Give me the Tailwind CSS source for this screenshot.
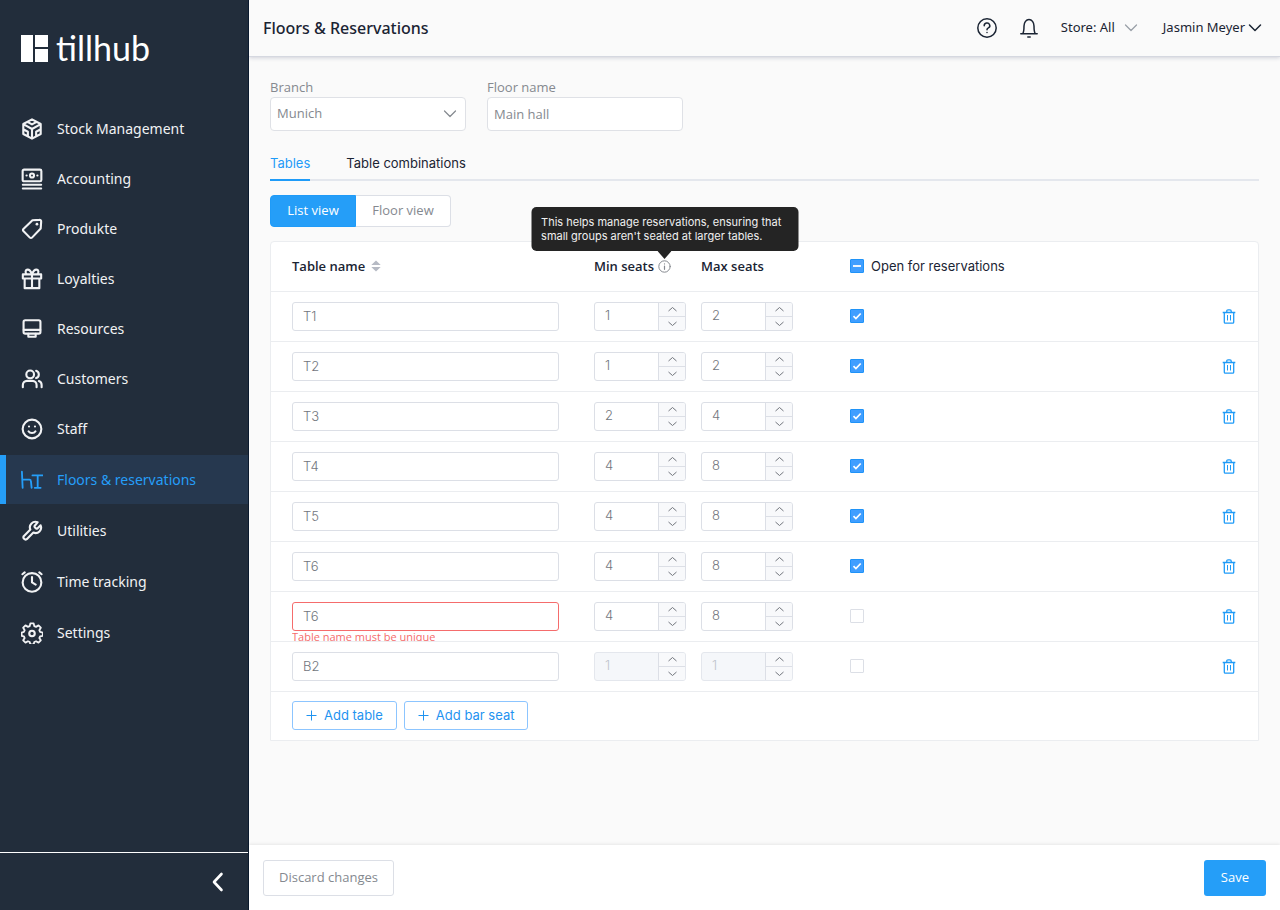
<!DOCTYPE html>
<html lang="en">
<head>
  <meta charset="UTF-8" />
  <title>Floors & Reservations</title>
  <meta name="viewport" content="width=device-width, initial-scale=1.0" />
  <script src="https://cdn.jsdelivr.net/npm/@tailwindcss/browser@4"></script>
</head>
<body class="flex min-h-screen bg-[#fafafa] font-['Open_Sans','Noto_Sans',sans-serif] text-[13px] text-[#1a2433]">

  <!-- Sidebar -->
  <aside class="flex w-[249px] shrink-0 flex-col border-r border-[#0b1a2e] bg-[#222d3b] text-white">
    <a href="#" class="flex h-[104px] items-center gap-2 px-5 pb-2">
      <svg class="h-7 w-7" viewBox="0 0 28 28" fill="currentColor" aria-hidden="true">
        <path d="M1 1h12v27H1zM15 1h13v12H15zM15 15h13v13H15z" />
      </svg>
      <span class="font-[Lato,sans-serif] text-[34px] leading-8">tillhub</span>
    </a>

    <nav class="flex grow flex-col gap-[2px] font-['Noto_Sans',sans-serif] text-sm">
      <ul class="flex flex-col gap-px" id="mainNav"></ul>
      <ul class="flex flex-col gap-[2px]" id="toolNav"></ul>
    </nav>

    <div class="flex h-[58px] items-center justify-end border-t border-white pr-5">
      <button type="button" aria-label="Collapse menu">
        <svg class="h-5 w-5" viewBox="0 0 20 20" fill="none" stroke="currentColor" stroke-width="2.6" stroke-linecap="round" stroke-linejoin="round"><path d="M13.500 2 6 10l7.500 8" /></svg>
      </button>
    </div>
  </aside>

  <div class="flex min-w-0 grow flex-col">
    <!-- Top bar -->
    <header class="flex h-[57px] shrink-0 items-center border-b border-[#d5d8e0] pr-[17px] pl-[14px] font-['Noto_Sans',sans-serif] shadow-[0_1px_4px_rgba(20,30,70,0.18)]">
      <h1 class="grow text-base font-medium">Floors &amp; Reservations</h1>
      <button type="button" aria-label="Help" class="mr-[22px]">
        <svg class="h-5 w-5" viewBox="0 0 20 20" fill="none" stroke="currentColor" stroke-width="1.5" stroke-linecap="round" stroke-linejoin="round"><circle cx="10" cy="10" r="9.200" /><path d="M7.200 7.800a2.800 2.600 0 1 1 4.200 2.100c-.9.500-1.400.9-1.400 1.800M10 14.400v.2" /></svg>
      </button>
      <button type="button" aria-label="Notifications" class="mr-[22px]">
        <svg class="h-5 w-5" viewBox="0 0 20 20" fill="none" stroke="currentColor" stroke-width="1.500" stroke-linecap="round" stroke-linejoin="round"><path d="M1.800 15.800h16.400M3.700 15.800c1.100-1.800 1.300-3.600 1.300-7.800a5 6.500 0 0 1 10 0c0 4.200.2 6 1.300 7.800M8.800 18.900h2.400" /></svg>
      </button>
      <button type="button" class="mr-6 flex items-center gap-2">Store: All
        <svg class="h-4 w-4 text-[#9aa0a8]" viewBox="0 0 16 16" fill="none" stroke="currentColor" stroke-width="1.300" stroke-linecap="round" stroke-linejoin="round"><path d="m2.500 5 5.500 5.500L13.500 5" /></svg>
      </button>
      <button type="button" class="flex items-center gap-[2px]">Jasmin Meyer
        <svg class="h-4 w-4" viewBox="0 0 16 16" fill="none" stroke="currentColor" stroke-width="1.500" stroke-linecap="round" stroke-linejoin="round"><path d="m2.500 5 5.500 5.500L13.500 5" /></svg>
      </button>
    </header>

    <main class="grow px-[21px] pt-[22px]">
      <!-- Floor settings -->
      <div class="flex gap-[21px] text-[#85898f]">
        <div class="w-[196px]">
          <label for="branch" class="block h-[18px] leading-4">Branch</label>
          <div class="grid items-center">
            <select id="branch" class="col-start-1 row-start-1 h-[34px] w-full appearance-none rounded border border-[#dfe1e6] bg-white px-[6px]">
              <option>Munich</option>
            </select>
            <svg class="pointer-events-none col-start-1 row-start-1 mr-2 h-4 w-4 justify-self-end" viewBox="0 0 16 16" fill="none" stroke="currentColor" stroke-width="1.200" stroke-linecap="round" stroke-linejoin="round"><path d="m2.500 5 5.500 5.500L13.500 5" /></svg>
          </div>
        </div>
        <div class="w-[196px]">
          <label for="floorName" class="block h-[18px] leading-4">Floor name</label>
          <input id="floorName" type="text" value="Main hall" class="h-[34px] w-full rounded border border-[#dfe1e6] bg-white px-[6px]" />
        </div>
      </div>

      <!-- Tabs -->
      <div class="mt-4 flex gap-9 border-b-2 border-[#e4e7ed] font-[Inter,sans-serif]">
        <button type="button" class="-mb-[2px] h-[34px] border-b-2 border-[#1f9bf8] pt-[2px] text-[#1f9bf8]">Tables</button>
        <button type="button" class="h-8 pt-[2px]">Table combinations</button>
      </div>

      <div class="mt-[14px] flex">
        <button type="button" class="h-8 w-[86px] rounded-l border border-[#1f9bf8] bg-[#259ef8] text-white">List view</button>
        <button type="button" class="h-8 w-[95px] rounded-r border border-l-0 border-[#dcdfe6] bg-white text-[#85898f]">Floor view</button>
      </div>

      <!-- Tables list -->
      <div class="mt-[14px] rounded-t border border-[#ebedf0] bg-white">
        <table class="w-full table-fixed text-left">
          <thead>
            <tr class="h-[49px] border-b border-[#ebedf0]">
              <th class="w-[323px] pl-[21px] font-semibold">
                <button type="button" class="flex items-center gap-[6px]">Table name
                  <svg class="h-3 w-[10px] text-[#b6bac4]" viewBox="0 0 10 12" fill="currentColor" aria-hidden="true"><path d="M5 .5 9.700 5H.3zM5 11.500.3 7h9.400z" /></svg>
                </button>
              </th>
              <th class="w-[107px] font-semibold">
                <div class="flex items-center gap-1">Min seats
                  <span class="relative text-[#85898f]">
                    <svg class="h-[13px] w-[13px]" viewBox="0 0 13 13" fill="none" stroke="currentColor" stroke-linecap="round"><circle cx="6.500" cy="6.500" r="5.700" /><path d="M6.500 6v3.300M6.500 3.800v.2" stroke-width="1.200" /></svg>
                    <!-- Tooltip -->
                    <span role="tooltip" class="absolute bottom-[22px] left-1/2 w-[267px] -translate-x-1/2 rounded-[5px] bg-[#242424] px-[10px] py-2 font-[Inter,sans-serif] text-[11px] leading-[14px] font-normal text-[#f0f0f0]">
                      This helps manage reservations, ensuring that small groups aren't seated at larger tables.
                      <svg class="absolute top-full left-1/2 h-2 w-[14px] -translate-x-1/2 text-[#242424]" viewBox="0 0 14 8" fill="currentColor"><path d="M0 0h14L7 8z" /></svg>
                    </span>
                  </span>
                </div>
              </th>
              <th class="w-[149px] font-semibold">Max seats</th>
              <th class="font-[Inter,sans-serif] font-normal">
                <label class="flex items-center gap-[7px]">
                  <span class="grid h-[14px] w-[14px]">
                    <input type="checkbox" id="openAll" class="col-start-1 row-start-1 h-[14px] w-[14px] appearance-none rounded-[1px] border border-[#1f93f8] bg-[#409eff]" />
                    <svg class="pointer-events-none col-start-1 row-start-1 h-[14px] w-[14px] text-white" viewBox="0 0 14 14" stroke="currentColor" stroke-width="1.800"><path d="M3 7h8" /></svg>
                  </span>
                  Open for reservations
                </label>
              </th>
              <th class="w-[60px]" aria-label="Actions"></th>
            </tr>
          </thead>
          <tbody id="tableRows"></tbody>
        </table>
        <div class="flex h-12 items-center gap-[7px] pl-[21px] font-[Inter,sans-serif] text-[#1f93f0]">
          <button type="button" class="flex h-[29px] items-center gap-[7px] rounded-[3px] border border-[#8cc5ff] px-[13px]">
            <svg class="h-[11px] w-[11px]" viewBox="0 0 11 11" stroke="currentColor"><path d="M5.500.5v10M.5 5.500h10" /></svg>Add table
          </button>
          <button type="button" class="flex h-[29px] items-center gap-[7px] rounded-[3px] border border-[#8cc5ff] px-[13px]">
            <svg class="h-[11px] w-[11px]" viewBox="0 0 11 11" stroke="currentColor"><path d="M5.500.5v10M.5 5.500h10" /></svg>Add bar seat
          </button>
        </div>
      </div>
    </main>

    <!-- Save bar -->
    <footer class="flex h-[65px] shrink-0 items-center justify-between bg-white px-[14px] shadow-[0_-1px_3px_rgba(0,0,0,0.08)]">
      <button type="button" class="h-9 rounded-[3px] border border-[#dcdfe6] px-[15px] text-[#85898f]">Discard changes</button>
      <button type="button" class="h-9 rounded-[3px] bg-[#259ef8] px-[17px] text-white">Save</button>
    </footer>
  </div>

  <script>
    const mainNav = [
      { name: 'Stock Management', icon: '<path d="M12 1.500 21.500 6.500v11l-9.500 5-9.500-5v-11zM7.500 4.500 12 7l4.500-2.500M3 7l9 5 9-5M12 12v10M3 12.500l4.500 2.500v4.500M21 12.500 16.500 15v4.500" />' },
      { name: 'Accounting', icon: '<rect x="1.800" y="1.800" width="20.400" height="12.700" rx="1.500" /><circle cx="12" cy="8.200" r="2.200" /><path d="M6 8.200h.2M17.800 8.200h.2M2 18.200h20M2 22.300h20" />' },
      { name: 'Produkte', icon: '<path d="M12.500 2.500 20 2a1.800 1.800 0 0 1 2 2l-.5 7.500L12 21.400a1.600 1.600 0 0 1-2.300 0L2.600 14.300a1.600 1.600 0 0 1 0-2.300z" /><path d="M17.300 6.700h.2" stroke-width="2.800" />' },
      { name: 'Loyalties', icon: '<path d="M2 7h20v4.500H2zM4 11.500V22h16V11.500M12 7v15M12 7C10.500 3 9 1.800 7.300 1.800 4.500 1.800 4.300 6 6.500 7M12 7c1.500-4 3-5.200 4.700-5.200C19.500 1.800 19.700 6 17.500 7" />' },
      { name: 'Resources', icon: '<rect x="2.800" y="2.500" width="18.400" height="14.500" rx="1.800" /><path d="M3 13h18M8 17.200v3.300h8v-3.300" />' },
      { name: 'Customers', icon: '<circle cx="10" cy="7" r="4.200" /><path d="M2 21v-2.500a4.500 4.500 0 0 1 4.500-4.500h6a4.500 4.500 0 0 1 4.500 4.500V21M16.500 3a4.200 4.200 0 0 1 0 8M19.500 14.300a4.500 4.500 0 0 1 3 4.200V21" />' },
      { name: 'Staff', icon: '<circle cx="12" cy="12" r="10.200" /><path d="M8.200 14.500c1.500 2.500 6.100 2.500 7.600 0M8.700 9.300h.1M15.200 9.300h.1" />' },
    ];

    const toolNav = [
      { name: 'Floors & reservations', active: true, icon: '<path d="M1 3 1.800 20.500M1.500 11.500h7.700q1.500 0 1.600 1.500l.8 7.500M12.500 7h11M18.200 7v13.500M15 20.500h6.400" stroke-width="2" />' },
      { name: 'Utilities', icon: '<path d="M15 6.300a1.200 1.200 0 0 0 0 1.500l1.400 1.400a1.200 1.200 0 0 0 1.500 0l3.500-3.400a6 6 0 0 1-7.900 7.900l-7.200 7.200a2.400 2.400 0 0 1-3.300-3.300l7.200-7.200a6 6 0 0 1 7.900-7.900z" />' },
      { name: 'Time tracking', icon: '<circle cx="12" cy="12.500" r="10.200" /><path d="M12 6.500v6l4 2.300M1.500 3.500 4 1.500M22.500 3.500 20 1.500" />' },
      { name: 'Settings', icon: '<path d="M10.200 1.500h3.600l.7 3 1.900.8 2.700-1.600 2.500 2.500-1.600 2.700.8 1.900 3 .7v3.600l-3 .5-.8 1.900 1.600 2.500-2.500 2.500-2.700-1.500-1.900.8-.7 2.700h-3.600l-.7-2.700-1.900-.8-2.700 1.500-2.500-2.500 1.600-2.500-.8-1.900-2.500-.5v-3.600l2.500-.7.8-1.900-1.600-2.700 2.500-2.500 2.700 1.600 1.900-.8z" stroke-width="2" /><circle cx="12" cy="12.500" r="3" />' },
    ];

    const tables = [
      { name: 'T1', min: 1, max: 2, open: true },
      { name: 'T2', min: 1, max: 2, open: true },
      { name: 'T3', min: 2, max: 4, open: true },
      { name: 'T4', min: 4, max: 8, open: true },
      { name: 'T5', min: 4, max: 8, open: true },
      { name: 'T6', min: 4, max: 8, open: true },
      { name: 'T6', min: 4, max: 8, open: false, error: 'Table name must be unique' },
      { name: 'B2', min: 1, max: 1, open: false, bar: true },
    ];

    function navItem(item) {
      const state = item.active
        ? 'border-[#259ef8] bg-[#26384f] text-[#259ef8]'
        : 'border-transparent text-[#f1f2f4]';
      return `
        <li>
          <a href="#" class="flex h-[49px] items-center gap-[14px] border-l-[6px] pl-[15px] ${state}">
            <svg class="h-[22px] w-[22px]" viewBox="0 0 24 24" fill="none" stroke="currentColor" stroke-width="2.300" stroke-linecap="round" stroke-linejoin="round">${item.icon}</svg>
            ${item.name.replace('&', '&amp;')}
          </a>
        </li>`;
    }

    function stepper(label, value, disabled) {
      const box = disabled ? 'border-[#e4e7ed] bg-[#f5f7fa] text-[#c0c4cc]' : 'border-[#dcdfe6] bg-white text-[#72767d]';
      return `
        <div class="flex h-[29px] w-[92px] overflow-hidden rounded-[3px] border ${box}">
          <input type="number" aria-label="${label}" value="${value}" ${disabled ? 'disabled' : ''}
            class="w-[63px] pl-[10px] [appearance:textfield] [&::-webkit-inner-spin-button]:appearance-none" />
          <div class="flex grow flex-col border-l border-[#dcdfe6] bg-[#f8f9fb] text-[#72767d]">
            <button type="button" aria-label="Increase" class="flex h-[14px] items-center justify-center border-b border-[#dcdfe6]">
              <svg class="h-[9px] w-[9px]" viewBox="0 0 9 9" fill="none" stroke="currentColor"><path d="m.5 6 4-3.500 4 3.500" /></svg>
            </button>
            <button type="button" aria-label="Decrease" class="flex h-[13px] items-center justify-center">
              <svg class="h-[9px] w-[9px]" viewBox="0 0 9 9" fill="none" stroke="currentColor"><path d="m.5 3 4 3.500 4-3.500" /></svg>
            </button>
          </div>
        </div>`;
    }

    function tableRow(t) {
      return `
        <tr class="h-[50px] border-b border-[#ebedf0] font-[Inter,sans-serif] font-light">
          <td class="relative overflow-hidden pl-[21px]">
            <input type="text" aria-label="Table name" value="${t.name}"
              class="block h-[29px] w-[267px] rounded-[3px] border px-[10px] text-[#72767d] ${t.error ? 'border-[#f56c6c]' : 'border-[#dcdfe6]'}" />
            ${t.error ? `<p class="absolute top-[38px] h-[11px] overflow-hidden font-['Open_Sans',sans-serif] text-[11px] leading-[14px] font-normal text-[#f56c6c]">${t.error}</p>` : ''}
          </td>
          <td>${stepper('Min seats', t.min, t.bar)}</td>
          <td>${stepper('Max seats', t.max, t.bar)}</td>
          <td>
            <span class="grid h-[14px] w-[14px]">
              <input type="checkbox" aria-label="Open for reservations" ${t.open ? 'checked' : ''}
                class="peer col-start-1 row-start-1 h-[14px] w-[14px] appearance-none rounded-[1px] border border-[#dcdfe6] bg-white checked:border-[#1f93f8] checked:bg-[#409eff]" />
              <svg class="pointer-events-none invisible col-start-1 row-start-1 h-[14px] w-[14px] text-white peer-checked:visible" viewBox="0 0 14 14" fill="none" stroke="currentColor" stroke-width="1.700"><path d="m3.500 7.200 2.400 2.300 4.800-5" /></svg>
            </span>
          </td>
          <td>
            <button type="button" aria-label="Delete table" class="mr-[22px] ml-auto block text-[#1f9bf8]">
              <svg class="h-[15px] w-[14px]" viewBox="0 0 14 15" fill="none" stroke="currentColor" stroke-width="1.300" stroke-linejoin="round"><path d="M.7 3.500h12.600M2.300 3.500v9.700q0 1 1 1h7.400q1 0 1-1V3.500M4.800 3.500V2q0-1.200 1.200-1.200h2q1.200 0 1.200 1.200v1.500" /><path d="M5.500 6v5.500M8.500 6v5.500" stroke-width="1" /></svg>
            </button>
          </td>
        </tr>`;
    }

    document.getElementById('mainNav').innerHTML = mainNav.map(navItem).join('');
    document.getElementById('toolNav').innerHTML = toolNav.map(navItem).join('');
    document.getElementById('tableRows').innerHTML = tables.map(tableRow).join('');
    document.getElementById('openAll').indeterminate = true;
  </script>
</body>
</html>
